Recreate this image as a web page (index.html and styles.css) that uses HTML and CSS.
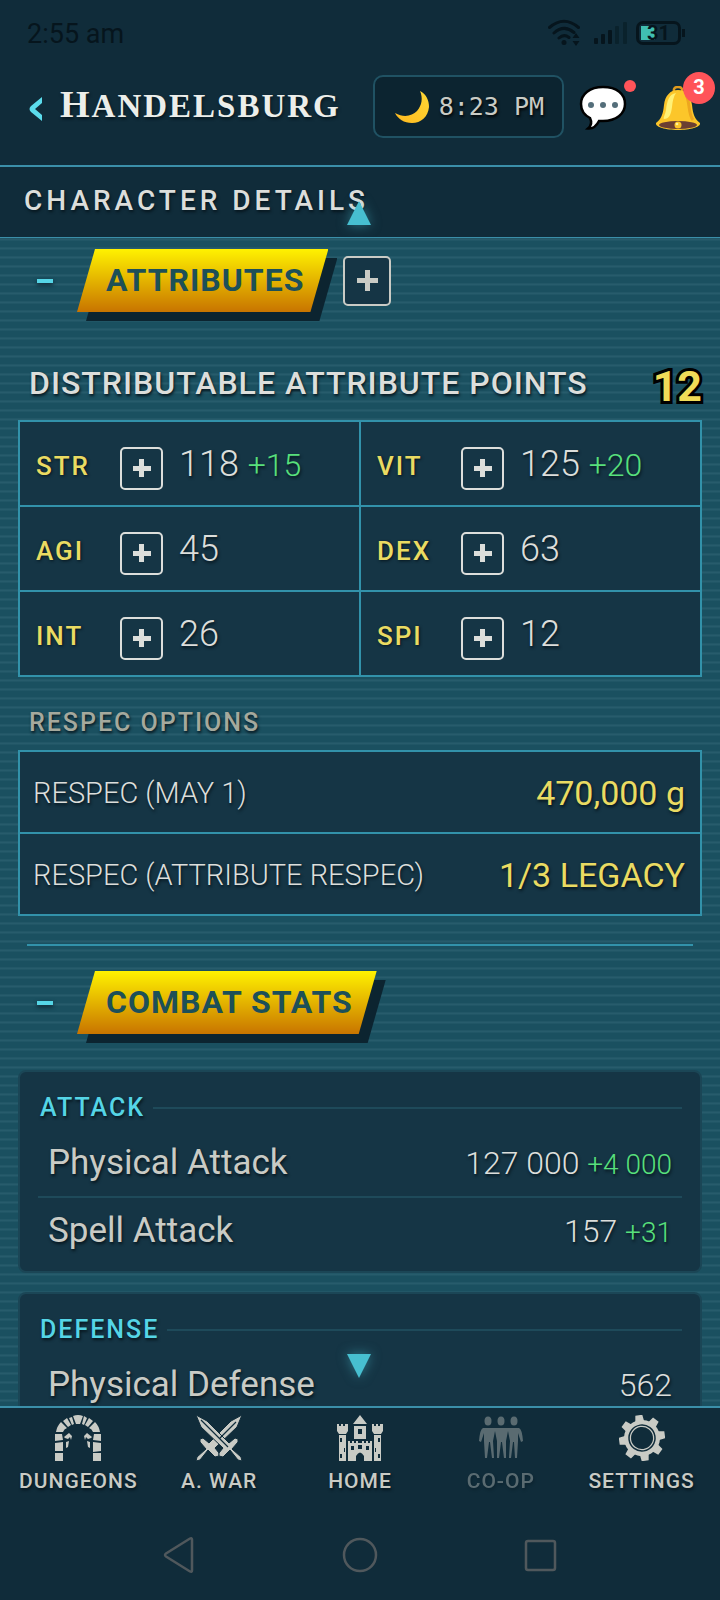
FILE: index.html
```html
<!DOCTYPE html>
<html lang="en">
<head>
<meta charset="utf-8">
<meta name="viewport" content="width=device-width, initial-scale=1">
<title>Handelsburg</title>
<link rel="stylesheet" href="styles.css">
</head>
<body>
<div class="app">
  <div class="status">
    <span class="status-time">2:55 am</span>
    <div class="status-icons">
      <svg width="34" height="28" viewBox="0 0 34 28" fill="none" stroke="#06151d" stroke-width="3" stroke-linecap="round"><path d="M2.500 8.500Q17-4 31.500 8.500M7 14Q17 5 27 13.500M12 19Q17 14.500 22 18.500"/><circle cx="17" cy="23.500" r="2.500" fill="#06151d" stroke="none"/><path d="M29 14l3.500 5h-7zM29 27l3.500-5h-7z" fill="#06151d" stroke="none"/></svg>
      <svg width="34" height="24" viewBox="0 0 34 24"><g fill="#06151d"><rect x="0" y="17" width="4" height="6" rx="1"/><rect x="7" y="13" width="4" height="10" rx="1"/><rect x="14" y="9" width="4" height="14" rx="1"/></g><g fill="#0a222c"><rect x="21" y="5" width="4" height="18" rx="1"/><rect x="29" y="1" width="4" height="22" rx="1"/></g></svg>
      <div class="battery"><span>31</span></div>
    </div>
  </div>

  <header class="topbar">
    <button class="back" aria-label="Back"><svg width="16" height="26" viewBox="0 0 16 26"><path d="M14 1v6L7 13l7 6v6L3 16q-3-3 0-6z" fill="#5bdcec"/></svg></button>
    <h1 class="town">Handelsburg</h1>
    <div class="clock">
      <svg width="34" height="34" viewBox="0 0 34 34"><defs><linearGradient id="moon" x1="0" y1="1" x2="1" y2="0"><stop offset="0" stop-color="#ffb91f"/><stop offset="1" stop-color="#fdd835"/></linearGradient></defs><path d="M25 1C31 4 34 10 34 17C33 27 26 33 17 33C9 33 3 29 0 23C9 28 17 26 22 21C27 15 28 8 25 1Z" fill="url(#moon)"/></svg>
      <span>8:23 PM</span>
    </div>
    <button class="chat" aria-label="Chat">
      <svg width="48" height="46" viewBox="0 0 48 46"><path d="M24 2C38 2 46 9 46 19C46 29 37 36 24 36L20 36C18 40 15 44 9 43.500C12 41 13 37 11 33C5 30 2 25 2 19C2 9 11 2 24 2Z" fill="#fff" stroke="#000" stroke-width="2.500"/><g fill="#546e7a"><circle cx="12" cy="20" r="3"/><circle cx="24" cy="20" r="3"/><circle cx="36" cy="20" r="3"/></g></svg>
      <i class="dot"></i>
    </button>
    <button class="bell" aria-label="Notifications">
      <svg width="46" height="45" viewBox="0 0 46 45"><path d="M19 6Q18 1 23 1Q28 1 27 6" fill="none" stroke="#e09b1d" stroke-width="2.500"/><path d="M23 4C31 4 36 10 37 19C38 29 40 33 45 37C46 41 35 44 23 44S0 41 1 37C6 33 8 29 9 19C10 10 15 4 23 4Z" fill="#fcc62a"/><path d="M21 7C14 8 12 15 11 24C10 29 8 32 9 33C14 33 16 29 17 21C18 13 19 10 21 7Z" fill="#fff176"/><path d="M31 9C35 15 33 28 38 34" stroke="#eda71f" stroke-width="3" fill="none"/><ellipse cx="23" cy="39" rx="19" ry="4" fill="#6b3f32"/><circle cx="23" cy="39" r="3.500" fill="#fcc62a"/><circle cx="22" cy="38" r="1.300" fill="#fff59d"/></svg>
      <b class="count">3</b>
    </button>
  </header>

  <div class="subbar">
    <h2 class="page-title">Character Details</h2>
    <i class="arrow arrow-up"></i>
  </div>

  <main class="content">
    <section>
      <div class="head">
        <button class="fold" aria-label="Collapse attributes"></button>
        <div class="banner"><h3>Attributes</h3></div>
        <button class="plus plus-lg" aria-label="Add attributes"></button>
      </div>
      <div class="points"><h4>Distributable Attribute Points</h4><strong>12</strong></div>
      <div class="attrs">
        <div class="attr"><span class="key">STR</span><button class="plus" aria-label="Raise STR"></button><span class="num">118 <em>+15</em></span></div>
        <div class="attr"><span class="key">VIT</span><button class="plus" aria-label="Raise VIT"></button><span class="num">125 <em>+20</em></span></div>
        <div class="attr"><span class="key">AGI</span><button class="plus" aria-label="Raise AGI"></button><span class="num">45</span></div>
        <div class="attr"><span class="key">DEX</span><button class="plus" aria-label="Raise DEX"></button><span class="num">63</span></div>
        <div class="attr"><span class="key">INT</span><button class="plus" aria-label="Raise INT"></button><span class="num">26</span></div>
        <div class="attr"><span class="key">SPI</span><button class="plus" aria-label="Raise SPI"></button><span class="num">12</span></div>
      </div>
      <h4 class="respec-title">Respec Options</h4>
      <div class="respecs">
        <button class="respec"><span>RESPEC (MAY 1)</span><b>470,000 g</b></button>
        <button class="respec"><span>RESPEC (ATTRIBUTE RESPEC)</span><b>1/3 LEGACY</b></button>
      </div>
    </section>
    <hr class="rule">
    <section>
      <div class="head">
        <button class="fold" aria-label="Collapse combat stats"></button>
        <div class="banner"><h3>Combat Stats</h3></div>
      </div>
      <div class="cards">
        <div class="card">
          <h4>Attack</h4>
          <dl>
            <div class="stat"><dt>Physical Attack</dt><dd>127 000 <em>+4 000</em></dd></div>
            <div class="stat"><dt>Spell Attack</dt><dd>157 <em>+31</em></dd></div>
          </dl>
        </div>
        <div class="card">
          <h4>Defense</h4>
          <dl>
            <div class="stat"><dt>Physical Defense</dt><dd>562</dd></div>
          </dl>
        </div>
      </div>
    </section>
  </main>

  <nav class="tabs">
    <i class="arrow arrow-down"></i>
    <a class="tab" href="#dungeons">
      <svg viewBox="0 0 46 46"><g fill="#c9cbc5"><path d="M0 38h8v8H0zM0 28l8-1v9H0zM0 19h7l1 6-8 1zM38 38h8v8h-8zM38 27l8 1v8l-8 1zM39 19h7v7l-8-1zM1 17Q2 11 6 7l6 6Q9 14 8 17zM8 6l4-3 4 7-3 2zM14 3l3-1 2 7-2 1zM18 1q5-2 10 0l-3 8h-4zM29 1l3 2-3 7-2-1zM34 3l4 3-5 6-3-2zM40 7q4 4 5 10h-7q-1-3-4-4z"/><path d="M9 22l5-4 3 3-1 4-1-3-2 2-3-1zM11 27l3-1-1 6-2 1zM37 22l-5-4-3 3 1 4 1-3 2 2 3-1zM35 27l-3-1 1 6 2 1z"/></g></svg>
      <span>Dungeons</span>
    </a>
    <a class="tab" href="#war">
      <svg viewBox="0 0 46 46"><g fill="#c9cbc5" stroke="#102c3a" stroke-width="1"><path d="M46 0L41 12 19 33l4 5v3l-4 1-7-7-8 10-4 1 1-4 9-8-6-7V24l3-1 6 5L35 6z"/><path d="M0 0l5 12 22 21-4 5v3l4 1 7-7 8 10 4 1-1-4-9-8 6-7V24l-3-1-6 5L11 6z"/></g><path d="M24 23L40 7M5 5l27 27" stroke="#102c3a" stroke-width="1.200"/></svg>
      <span>A. War</span>
    </a>
    <a class="tab" href="#home">
      <svg viewBox="0 0 46 46"><path fill="#c9cbc5" fill-rule="evenodd" d="M0 9h2v2h2V9h2v2h2V9h3v7l-2 3H2l-2-3zM2 20h7v26H2zm1 3v4h2v-4zm4 10v4h1v-4zm-4 6v4h2v-4zM35 9h2v2h2V9h2v2h2V9h3v7l-2 3h-7l-2-3zM37 20h7v26h-7zm4 3v4h2v-4zm-3 10v4h1v-4zm3 6v4h2v-4zM23 0l7 9H16zM17 11h12v13H17zm4 3v5h4v-5zM11 26h2v2h2v-2h2v2h2v-2h2v2h4v-2h2v2h2v-2h2v2h2v-2h2v20h-8v-5q-4-7-8 0v5h-8zm3 5v4h3v-4zm7-1v4h4v-4zm8 1v4h3v-4z"/></svg>
      <span>Home</span>
    </a>
    <a class="tab tab-off" href="#coop">
      <svg viewBox="0 0 46 46"><g fill="#c9cbc5"><ellipse cx="10" cy="6" rx="3.500" ry="4.500"/><ellipse cx="23" cy="6" rx="3.500" ry="4.500"/><ellipse cx="36" cy="6" rx="3.500" ry="4.500"/><path d="M5 13h36q3 1 4 13l-2 1-3-9v8l-1 17h-2l-1-16h-1l-2 16h-2l1-17-2-10-2 10v17h-2l-2-16h-1l-2 16h-2V26l-2-10-2 10 1 17h-2l-2-16h-1L9 43H7L6 26v-8l-3 9-2-1Q2 14 5 13z"/></g></svg>
      <span>Co-op</span>
    </a>
    <a class="tab" href="#settings">
      <svg viewBox="0 0 46 46"><g transform="rotate(-8 23 23)"><g fill="#c9cbc5"><circle cx="23" cy="23" r="18"/><g id="teeth"><path d="M18.500 7l1-7h7l1 7zM18.500 39l1 7h7l1-7z"/><path d="M7 18.500l-7 1v7l7 1zM39 18.500l7 1v7l-7 1z"/></g><use href="#teeth" transform="rotate(45 23 23)"/></g><circle cx="23" cy="23" r="13" fill="none" stroke="#102c3a" stroke-width="1.500"/><circle cx="23" cy="23" r="11" fill="#102c3a"/></g></svg>
      <span>Settings</span>
    </a>
  </nav>

  <div class="system">
    <button aria-label="System back"><svg width="36" height="40" viewBox="0 0 36 40"><path d="M31 4.500v31q0 2-2 1L5 21.500q-2-1.500 0-3L29 3.500q2-1 2 1z"/></svg></button>
    <button aria-label="System home"><svg width="36" height="40" viewBox="0 0 36 40"><circle cx="18" cy="20" r="16"/></svg></button>
    <button aria-label="System recents"><svg width="36" height="40" viewBox="0 0 36 40"><rect x="3" y="6" width="29" height="29" rx="2"/></svg></button>
  </div>
</div>
</body>
</html>
```
FILE: styles.css
```css
* { box-sizing: border-box; }
body {
  margin: 0;
  background: #102c3a;
  color: #dcdedb;
  font-family: Roboto, "Liberation Sans", sans-serif;
}
h1, h2, h3, h4, dl, dd { margin: 0; }
button {
  padding: 0;
  border: 0;
  background: none;
  color: inherit;
  font-family: inherit;
}
em { font-style: normal; color: #58e07c; }
svg { display: block; }

.app { display: flex; flex-direction: column; height: 100vh; overflow: hidden; }

.status {
  display: flex;
  justify-content: space-between;
  align-items: center;
  height: 66px;
  padding: 0 39px 0 27px;
  color: #06151d;
}
.status-time { padding-top: 2px; font-size: 27px; }
.status-icons { display: flex; align-items: center; gap: 13px; }
.battery {
  position: relative;
  width: 45px;
  height: 24px;
  margin-left: -5px;
  border: 3px solid #06151d;
  border-radius: 7px;
  background: linear-gradient(90deg, #40bfb2 14px, transparent 14px) 2px 2px / 36px 14px no-repeat;
  font-size: 20px;
  font-weight: 700;
  line-height: 18px;
  text-align: center;
}
.battery::after {
  content: "";
  position: absolute;
  right: -7px;
  top: 5px;
  width: 3px;
  height: 8px;
  background: #06151d;
}

.topbar {
  display: flex;
  align-items: center;
  height: 101px;
  padding: 0 19px 18px 28px;
  border-bottom: 2px solid #3b8fa9;
}
.back { margin: 4px 16px 0 0; }
.town {
  flex: 1;
  padding-bottom: 4px;
  font-family: "Liberation Serif", serif;
  font-size: 33px;
  line-height: 40px;
  letter-spacing: 2px;
  text-transform: uppercase;
  color: #eceeea;
  text-shadow: 1px 2px 3px #06151d;
}
.town::first-letter { font-size: 38px; }
.clock {
  display: flex;
  align-items: center;
  gap: 10px;
  height: 63px;
  padding: 0 18px 0 20px;
  border: 2px solid #205263;
  border-radius: 10px;
  background: #0c2430;
  font-family: "DejaVu Sans Mono", monospace;
  font-size: 25px;
  color: #c9cbc5;
  text-shadow: 1px 2px 3px #000;
}
.chat, .bell { position: relative; padding-top: 3px; }
.chat { margin-left: 15px; }
.bell { margin-left: 28px; }
.dot {
  position: absolute;
  right: -9px;
  top: -2px;
  width: 12px;
  height: 12px;
  border-radius: 50%;
  background: #ff5459;
}
.count {
  position: absolute;
  right: -14px;
  top: -11px;
  width: 32px;
  height: 32px;
  border-radius: 50%;
  background: #ff5459;
  color: #fff;
  font-size: 20px;
  line-height: 31px;
}

.subbar {
  position: relative;
  display: flex;
  align-items: center;
  height: 71px;
  padding: 0 24px 2px;
  border-bottom: 1px solid #3b8fa9;
}
.page-title {
  font-size: 28px;
  font-weight: 500;
  line-height: 36px;
  letter-spacing: 4px;
  text-transform: uppercase;
  text-shadow: 1px 2px 3px #06151d;
}
.arrow {
  position: absolute;
  left: 50%;
  width: 24px;
  height: 24px;
  margin-left: -13px;
  filter: drop-shadow(0 0 6px #47bfd080);
}
.arrow::before {
  content: "";
  display: block;
  height: 24px;
  background: #47bfd0;
}
.arrow-up { top: 34px; }
.arrow-up::before { clip-path: polygon(50% 0, 100% 100%, 0 100%); }
.arrow-down { top: -54px; }
.arrow-down::before { clip-path: polygon(0 0, 100% 0, 50% 100%); }

.content {
  flex: 1;
  min-height: 0;
  overflow-y: auto;
  scrollbar-width: none;
  padding: 11px 18px 0;
  background: repeating-linear-gradient(#1d5262 0, #275c6c 1px, #275c6c 2px, #1a5060 3px, #1a5060 9px);
}
.head { display: flex; align-items: center; padding-left: 19px; }
.fold {
  width: 16px;
  height: 4px;
  margin-right: 24px;
  background: #55d5e6;
  box-shadow: 0 2px 4px #0c2430;
}
.banner { position: relative; padding: 0 24px 0 29px; line-height: 63px; }
.banner::before, .banner::after {
  content: "";
  position: absolute;
  inset: 0;
  clip-path: polygon(18px 0, 100% 0, calc(100% - 18px) 100%, 0 100%);
}
.banner::before { background: #0c2430; translate: 9px 9px; }
.banner::after { background: linear-gradient(#fff200, #c87400); }
.banner h3 {
  position: relative;
  z-index: 1;
  font-size: 32px;
  font-weight: 700;
  letter-spacing: 1px;
  text-transform: uppercase;
  color: #1d5058;
}
.plus {
  width: 43px;
  height: 43px;
  border: 2px solid #dcdedb;
  border-radius: 5px;
  background:
    linear-gradient(#dcdedb, #dcdedb) center / 18px 5px no-repeat,
    linear-gradient(#dcdedb, #dcdedb) center / 5px 18px no-repeat,
    #153545;
}
.plus-lg {
  width: 48px;
  height: 50px;
  margin-left: 15px;
  border-color: #c9cbc5;
  background:
    linear-gradient(#c9cbc5, #c9cbc5) center / 21px 5px no-repeat,
    linear-gradient(#c9cbc5, #c9cbc5) center / 5px 21px no-repeat,
    #153545;
}

.points {
  display: flex;
  justify-content: space-between;
  align-items: center;
  margin-top: 46px;
  height: 62px;
  padding: 0 0 12px 11px;
}
.points h4 {
  font-size: 32px;
  font-weight: 500;
  letter-spacing: 1px;
  text-transform: uppercase;
  text-shadow: 1px 2px 3px #06151d;
}
.points strong {
  padding-top: 6px;
  font-size: 43px;
  line-height: 48px;
  color: #f0dc58;
  -webkit-text-stroke: 6px #000;
  paint-order: stroke fill;
}
.attrs, .respecs { display: grid; gap: 2px; padding: 2px; background: #3292aa; }
.attrs { grid-template-columns: 1fr 1fr; }
.attr {
  display: flex;
  align-items: center;
  height: 83px;
  padding: 1px 0 0 16px;
  background: #153545;
}
.key {
  width: 84px;
  padding-top: 4px;
  font-size: 26px;
  font-weight: 500;
  letter-spacing: 2px;
  color: #eadb62;
  text-shadow: 1px 1px 3px #06151d;
}
.attr .plus { margin-top: 8px; }
.num {
  padding-left: 16px;
  font-size: 36px;
  font-weight: 300;
  text-shadow: 1px 2px 3px #06151d;
}
.num em { font-size: 32px; }
.respec-title {
  margin: 30px 0 11px 11px;
  font-size: 25px;
  font-weight: 500;
  line-height: 32px;
  letter-spacing: 2px;
  text-transform: uppercase;
  color: #a5a99d;
  text-shadow: 1px 2px 3px #06151d;
}
.respec {
  display: flex;
  justify-content: space-between;
  align-items: center;
  height: 80px;
  padding: 2px 15px 0 13px;
  background: #153545;
  font-size: 29px;
  text-shadow: 1px 2px 3px #06151d;
}
.respec span { font-weight: 300; }
.respec b { font-size: 34px; font-weight: 400; color: #eadb62; }
.rule { height: 2px; margin: 28px 9px 25px; border: 0; background: #3292aa; }

.cards { display: grid; gap: 19px; margin-top: 36px; }
.card {
  padding: 20px 18px 8px;
  border: 2px solid #1b4656;
  border-radius: 8px;
  background: #153545;
}
.card h4 {
  display: flex;
  align-items: center;
  gap: 8px;
  margin-bottom: 5px;
  padding-left: 2px;
  font-size: 25px;
  font-weight: 500;
  line-height: 32px;
  letter-spacing: 2px;
  text-transform: uppercase;
  color: #55d5e6;
  text-shadow: 1px 2px 3px #06151d;
}
.card h4::after { content: ""; flex: 1; height: 2px; background: #1e4a5a; }
.stat {
  display: flex;
  justify-content: space-between;
  align-items: center;
  height: 67px;
  padding: 0 10px;
  text-shadow: 1px 2px 3px #06151d;
}
.stat + .stat { border-top: 2px solid #1e4a5a; }
.stat dt { font-size: 35px; color: #c9cbc5; }
.stat dd { font-size: 32px; font-weight: 300; }
.stat em { font-size: 28px; }

.tabs {
  position: relative;
  display: grid;
  grid-template-columns: repeat(5, 1fr);
  height: 94px;
  padding: 7px 8px 0;
  border-top: 2px solid #3b8fa9;
}
.tab {
  display: flex;
  flex-direction: column;
  align-items: center;
  gap: 6px;
  color: #c9cbc5;
  font-size: 21px;
  font-weight: 500;
  line-height: 28px;
  letter-spacing: 1px;
  text-decoration: none;
  text-transform: uppercase;
  text-shadow: 1px 2px 3px #06151d;
}
.tab svg { width: 46px; height: 46px; }
.tab-off { opacity: .4; }

.system { display: flex; justify-content: center; gap: 145px; height: 100px; padding-top: 10px; }
.system svg { fill: none; stroke: #50585c; stroke-width: 2.500; }
```
